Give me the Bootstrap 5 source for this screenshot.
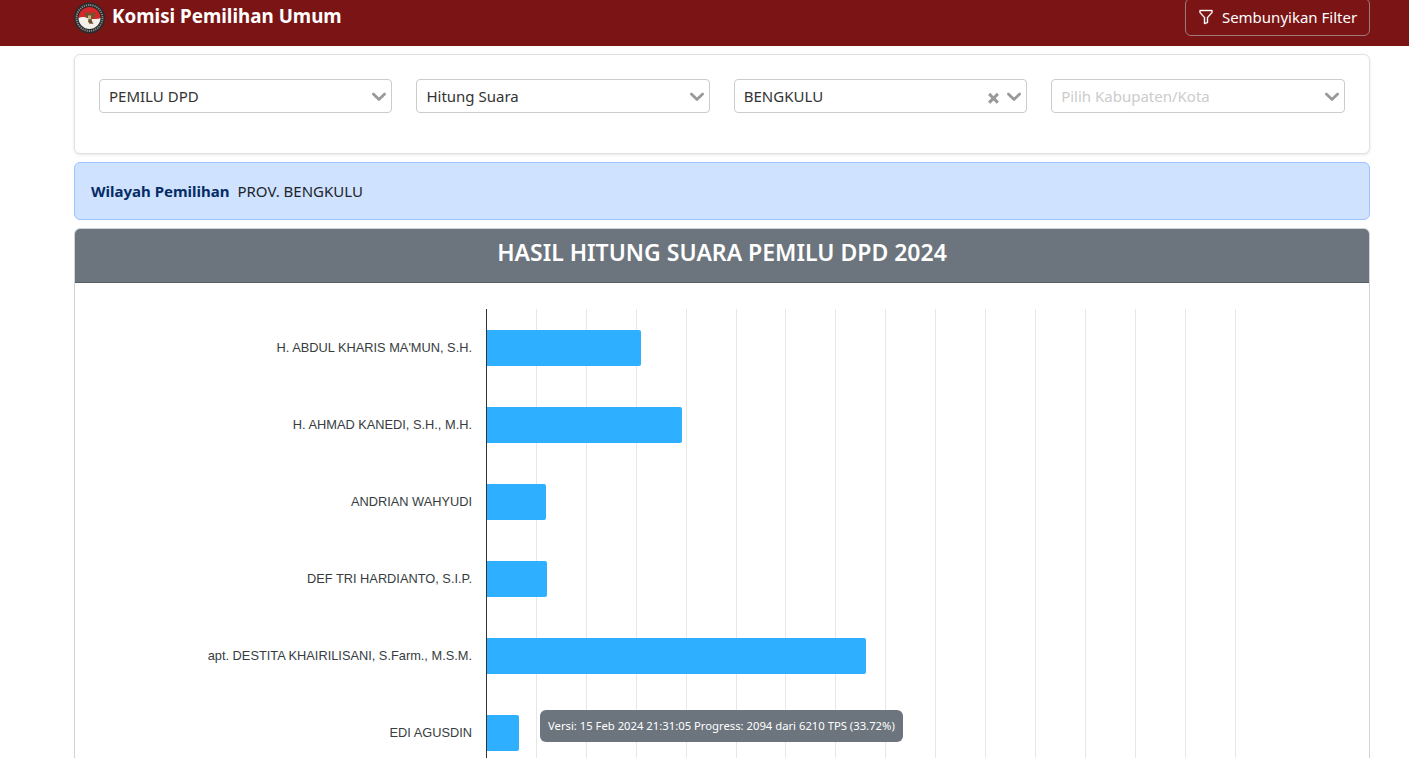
<!DOCTYPE html>
<html lang="en">
<head>
<meta charset="UTF-8" />
<title>Komisi Pemilihan Umum</title>
<link rel="stylesheet" href="https://cdn.jsdelivr.net/npm/bootstrap@5.3.0/dist/css/bootstrap.min.css" />
<style>
  html, body { height: 100vh; overflow: hidden; }
  body { font-family: "Noto Sans", sans-serif; font-size: 15px; color: #212529; background: #fff; }
  .kpu-bar { background: #7b1515; height: 46px; padding: 0 39px 0 74px; }
  .kpu-logo { width: 31px; height: 32px; margin-top: 2px; }
  .kpu-title { color: #fff; font-size: 18.8px; font-weight: 700; line-height: 32px; margin-left: 7px; }
  .kpu-filter-btn { color: #fff; font-size: 15px; height: 38px; margin-top: -2px; width: 185px; padding: 0; border-color: #a07a7a; border-radius: 6px; }
  .kpu-page { padding: 8px 39px 0 74px; }
  .filter-box { height: 100px; padding: 24px; border-color: #dee2e6; box-shadow: 0 1px 3px rgba(0,0,0,.1); margin-bottom: 8px; }
  .filter-grid { display: grid; grid-template-columns: repeat(4, 293.4px); gap: 24px; }
  .pick { height: 34px; border: 1px solid #ccc; border-radius: 4px; padding: 0 0 0 9px; color: #333; background: #fff; }
  .pick-hint { color: #ccc; }
  .pick svg { flex: none; }
  .region-box { height: 58px; padding: 0 16px; margin-bottom: 8px; background: #cfe2ff; border-color: #9ec5fe; color: #052c65; }
  .region-box b { color: #052c65; margin-right: 8px; }
  .region-box span { color: #212529; }
  .result-box { border-color: #ced4da; border-radius: 6px; overflow: hidden; }
  .result-head { background: #6c757d; color: #fff; height: 54px; font-size: 23px; font-weight: 600; line-height: 46px; text-align: center; border-bottom: 1px solid #565e64; }
  .chart { position: relative; padding: 26px 0 0 0; }
  .plot-row { display: flex; height: 77px; align-items: center; }
  .plot-name { width: 411px; flex: none; padding-right: 14px; text-align: right; font: 12.8px "Liberation Sans", sans-serif; color: #373d3f; }
  .plot-track { flex: 1; height: 77px; display: flex; align-items: center; border-left: 1px solid #333; }
  .plot-fill { height: 36px; background: #2eafff; border-radius: 0 2px 2px 0; position: relative; }
  .plot-lines { position: absolute; top: 26px; left: 412px; height: 600px; width: 749px; background: repeating-linear-gradient(to right, transparent 0, transparent 48.9px, #e7e7e7 48.9px, #e7e7e7 49.9px); }
  .version-tip { position: absolute; left: 540px; top: 710px; height: 32px; line-height: 32px; padding: 0 8px; border-radius: 6px; background: #6c757d; color: #fff; font-size: 11.27px; white-space: nowrap; }
</style>
</head>
<body>

<div class="kpu-bar d-flex justify-content-between align-items-start">
  <div class="d-flex align-items-start">
    <svg class="kpu-logo" viewBox="0 0 31 32" aria-hidden="true">
      <circle cx="15.5" cy="16" r="15.5" fill="#2b2b2b"/>
      <circle cx="15.5" cy="16" r="13" fill="none" stroke="#8f8f8f" stroke-width="1.8" stroke-dasharray="1.2 1"/>
      <path d="M4.500 16C4.500 10 9.500 5 15.500 5S26.500 10 26.500 16c-3 1.500-7 1.200-11 .2S7.500 14.500 4.500 16z" fill="#d5262a"/>
      <path d="M4.500 16c3-1.500 7-1 11 .2S23.500 17.500 26.500 16c0 6-5 11-11 11S4.500 22 4.500 16z" fill="#f3f0ea"/>
      <path d="M15.500 9l1.200 2.500 4.800-1.500-1.200 5.500-2.800 1.200.7 2.800 1.300 2.300h-4l-1.500-2.300.7-2.800-2.800-1.200-1.200-5.500 4.800 1.500z" fill="#6f5430"/>
      <rect x="14" y="13.500" width="3" height="3.500" fill="#c9b48a"/>
    </svg>
    <span class="kpu-title">Komisi Pemilihan Umum</span>
  </div>
  <button type="button" class="btn kpu-filter-btn d-flex align-items-center justify-content-center gap-2">
    <svg width="16" height="16" viewBox="0 0 16 16" fill="#fff" stroke="#fff" stroke-width=".4" aria-hidden="true"><path d="M1.500 1.500A.5.500 0 0 1 2 1h12a.5.500 0 0 1 .5.500v2a.5.500 0 0 1-.128.334L10 8.692V13.500a.5.500 0 0 1-.342.474l-3 1A.5.500 0 0 1 6 14.500V8.692L1.628 3.834A.5.500 0 0 1 1.500 3.500v-2zm1 .5v1.308l4.372 4.858A.5.500 0 0 1 7 8.500v5.306l2-.666V8.500a.5.500 0 0 1 .128-.334L13.500 3.308V2h-11z"/></svg>
    Sembunyikan Filter
  </button>
</div>

<div class="kpu-page">
  <div class="card filter-box">
    <div class="filter-grid">
      <div class="pick d-flex align-items-center justify-content-between">PEMILU DPD
        <svg width="24" height="24" viewBox="0 0 20 20" fill="#999"><path d="M4.516 7.548c.436-.446 1.043-.481 1.576 0L10 11.295l3.908-3.747c.533-.481 1.141-.446 1.574 0 .436.445.408 1.197 0 1.615-.406.418-4.695 4.502-4.695 4.502a1.095 1.095 0 0 1-1.576 0S4.924 9.581 4.516 9.163s-.436-1.170 0-1.615z"/></svg>
      </div>
      <div class="pick d-flex align-items-center justify-content-between">Hitung Suara
        <svg width="24" height="24" viewBox="0 0 20 20" fill="#999"><path d="M4.516 7.548c.436-.446 1.043-.481 1.576 0L10 11.295l3.908-3.747c.533-.481 1.141-.446 1.574 0 .436.445.408 1.197 0 1.615-.406.418-4.695 4.502-4.695 4.502a1.095 1.095 0 0 1-1.576 0S4.924 9.581 4.516 9.163s-.436-1.170 0-1.615z"/></svg>
      </div>
      <div class="pick d-flex align-items-center">BENGKULU
        <svg class="ms-auto" width="17" height="17" viewBox="0 0 14 14" fill="#999"><path d="M2.500 4.300l1.800-1.800L7 5.200l2.700-2.700 1.800 1.800L8.800 7l2.700 2.700-1.800 1.800L7 8.800l-2.700 2.700-1.800-1.800L5.200 7z" transform="translate(0 1.500)"/></svg>
        <svg width="24" height="24" viewBox="0 0 20 20" fill="#999"><path d="M4.516 7.548c.436-.446 1.043-.481 1.576 0L10 11.295l3.908-3.747c.533-.481 1.141-.446 1.574 0 .436.445.408 1.197 0 1.615-.406.418-4.695 4.502-4.695 4.502a1.095 1.095 0 0 1-1.576 0S4.924 9.581 4.516 9.163s-.436-1.170 0-1.615z"/></svg>
      </div>
      <div class="pick pick-hint d-flex align-items-center justify-content-between">Pilih Kabupaten/Kota
        <svg width="24" height="24" viewBox="0 0 20 20" fill="#999"><path d="M4.516 7.548c.436-.446 1.043-.481 1.576 0L10 11.295l3.908-3.747c.533-.481 1.141-.446 1.574 0 .436.445.408 1.197 0 1.615-.406.418-4.695 4.502-4.695 4.502a1.095 1.095 0 0 1-1.576 0S4.924 9.581 4.516 9.163s-.436-1.170 0-1.615z"/></svg>
      </div>
    </div>
  </div>

  <div class="card region-box d-flex flex-row align-items-center"><b>Wilayah Pemilihan</b><span>PROV. BENGKULU</span></div>

  <div class="card result-box">
    <div class="result-head">HASIL HITUNG SUARA PEMILU DPD 2024</div>
    <div class="chart">
      <div class="plot-lines"></div>
      <div id="rows"></div>
    </div>
  </div>
</div>

<div class="version-tip">Versi: 15 Feb 2024 21:31:05 Progress: 2094 dari 6210 TPS (33.72%)</div>

<script src="https://cdn.jsdelivr.net/npm/bootstrap@5.3.0/dist/js/bootstrap.bundle.min.js"></script>
<script>
  const candidates = [
    ["H. ABDUL KHARIS MA'MUN, S.H.", 154],
    ["H. AHMAD KANEDI, S.H., M.H.", 195],
    ["ANDRIAN WAHYUDI", 59],
    ["DEF TRI HARDIANTO, S.I.P.", 60],
    ["apt. DESTITA KHAIRILISANI, S.Farm., M.S.M.", 379],
    ["EDI AGUSDIN", 32]
  ];
  document.getElementById("rows").innerHTML = candidates.map(c =>
    `<div class="plot-row"><div class="plot-name">${c[0]}</div><div class="plot-track"><div class="plot-fill" style="width:${c[1]}px"></div></div></div>`
  ).join("");
</script>
</body>
</html>
